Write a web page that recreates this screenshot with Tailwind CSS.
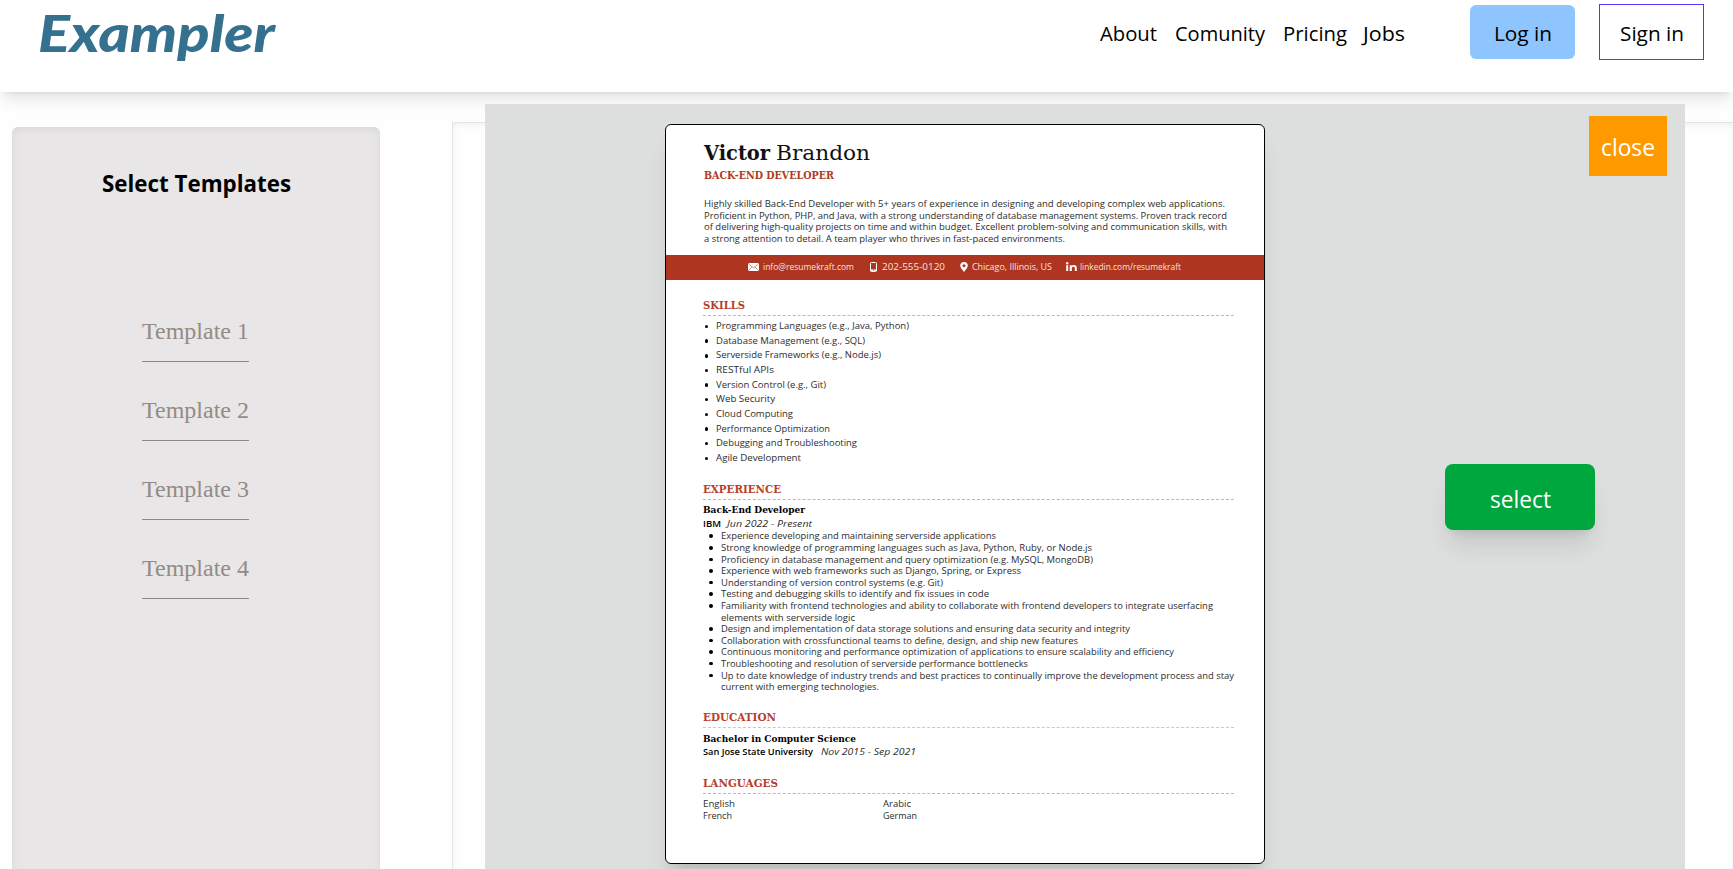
<!DOCTYPE html>
<html lang="en">
<head>
<meta charset="utf-8">
<title>Exampler</title>
<script src="https://cdn.jsdelivr.net/npm/@tailwindcss/browser@4"></script>
</head>
<body class="h-[869px] overflow-hidden bg-[#fefefe] font-['Open_Sans','Noto_Sans',sans-serif] text-black">
<header class="relative flex h-[92px] items-start justify-between bg-white shadow-lg">
  <div class="pl-[38px] -mt-[1px]">
    <span data-w="237" class="inline-block origin-left whitespace-nowrap font-[Lato,sans-serif] text-[51px] leading-[68px] font-black italic text-[#35718f]">Exampler</span>
  </div>
  <div class="flex items-start pr-[29px] text-[20px]">
    <nav class="flex h-[67px] items-center">
      <a class="w-[75px]"><span data-w="57" class="inline-block origin-left whitespace-nowrap">About</span></a>
      <a class="w-[108px]"><span data-w="90" class="inline-block origin-left whitespace-nowrap">Comunity</span></a>
      <a class="w-[80px]"><span data-w="64" class="inline-block origin-left whitespace-nowrap">Pricing</span></a>
      <a class="w-[107px]"><span data-w="42" class="inline-block origin-left whitespace-nowrap">Jobs</span></a>
    </nav>
    <button class="mt-[5px] flex h-[54px] w-[105px] items-center rounded-md bg-blue-300 pt-[3px] pl-[24px]"><span data-w="58" class="inline-block origin-left whitespace-nowrap">Log in</span></button>
    <button class="mt-[4px] ml-[24px] flex h-[56px] w-[105px] items-center border border-indigo-600 pt-[3px] pl-[20px]"><span data-w="64" class="inline-block origin-left whitespace-nowrap">Sign in</span></button>
  </div>
</header>

<main class="flex h-[777px] items-start overflow-hidden">
  <aside class="mt-[35px] ml-[12px] flex h-[900px] w-[368px] flex-col rounded-md bg-[#e8e6e7] pt-[38px] shadow-[inset_0_2px_8px_rgba(0,0,0,0.07)]">
    <h2 class="pl-[90px] text-[24px] leading-[36px] font-bold"><span data-w="189" class="inline-block origin-left whitespace-nowrap">Select Templates</span></h2>
    <ul class="mt-[112px] ml-[130px] flex w-[107px] flex-col gap-[30px] font-['Liberation_Serif',serif] text-[24px] leading-[36px] text-[#938b86]">
      <li class="h-[49px] border-b border-[#8c8784] whitespace-nowrap">Template 1</li>
      <li class="h-[49px] border-b border-[#8c8784] whitespace-nowrap">Template 2</li>
      <li class="h-[49px] border-b border-[#8c8784] whitespace-nowrap">Template 3</li>
      <li class="h-[49px] border-b border-[#8c8784] whitespace-nowrap">Template 4</li>
    </ul>
  </aside>
  <section class="mt-[30px] ml-[72px] h-[900px] flex-1 border-t border-l border-[#e2e4e8] shadow-[inset_0_2px_6px_rgba(0,0,0,0.06)]"></section>
</main>

<!-- Template preview dialog -->
<div class="absolute top-[104px] left-[485px] grid h-[765px] w-[1200px] grid-cols-[180px_600px_420px] overflow-hidden bg-[#dddfde]">
  <div></div>
  <article class="mt-[20px] h-[740px] overflow-hidden rounded-md border border-black bg-white text-[9px] text-[#2d2d2d] shadow-xl">
    <div class="pt-[15px] pl-[38px]">
      <h1 class="flex h-[27px] font-['DejaVu_Serif',serif] text-[20px] leading-[27px] text-[#111]">
        <span class="w-[72px]"><b data-w="66" class="inline-block origin-left whitespace-nowrap">Victor</b></span>
        <span data-w="94" class="inline-block origin-left whitespace-nowrap">Brandon</span>
      </h1>
      <p class="h-[17px] font-['DejaVu_Serif',serif] text-[10.5px] leading-[17px] font-bold text-[#b23b25]"><span data-w="130" class="inline-block origin-left whitespace-nowrap">BACK-END DEVELOPER</span></p>
      <div class="mt-[14px] flex h-[57px] flex-col items-start leading-[11.65px]">
        <span data-w="521" class="inline-block origin-left whitespace-nowrap">Highly skilled Back-End Developer with 5+ years of experience in designing and developing complex web applications.</span>
        <span data-w="523" class="inline-block origin-left whitespace-nowrap">Proficient in Python, PHP, and Java, with a strong understanding of database management systems. Proven track record</span>
        <span data-w="523" class="inline-block origin-left whitespace-nowrap">of delivering high-quality projects on time and within budget. Excellent problem-solving and communication skills, with</span>
        <span data-w="361" class="inline-block origin-left whitespace-nowrap">a strong attention to detail. A team player who thrives in fast-paced environments.</span>
      </div>
    </div>
    <div class="flex h-[25px] items-center bg-[#ae3520] pb-[2px] pl-[82px] leading-[12px] text-[#f6e3df]">
      <svg class="h-[8px] w-[11px]" viewBox="0 0 11 8"><rect width="11" height="8" rx="1.5" fill="#fff"/><path d="M1.2 1.4 5.5 4.8 9.8 1.4M1.2 6.8 4 4M9.8 6.8 7 4" fill="none" stroke="#ae3520" stroke-width=".6"/></svg>
      <span class="ml-[4px] w-[107px]"><span data-w="91" class="inline-block origin-left whitespace-nowrap">info@resumekraft.com</span></span>
      <svg class="h-[10px] w-[7px]" viewBox="0 0 7 10"><rect x=".5" y=".5" width="6" height="9" rx=".9" fill="none" stroke="#fff"/><path d="M.5 7.5h6V9h-6z" fill="#fff"/><circle cx="3.5" cy="8.5" r=".5" fill="#ae3520"/></svg>
      <span class="ml-[5px] w-[78px]"><span data-w="63" class="inline-block origin-left whitespace-nowrap">202-555-0120</span></span>
      <svg class="h-[10px] w-[8px]" viewBox="0 0 8 10"><path fill-rule="evenodd" d="M4 0a3.8 3.8 0 0 1 3.8 3.8C7.8 6 5.2 8 4 10 2.8 8 .2 6 .2 3.8A3.8 3.8 0 0 1 4 0zm0 2.3a1.5 1.5 0 1 0 0 3 1.5 1.5 0 0 0 0-3z" fill="#fff"/></svg>
      <span class="ml-[4px] w-[94px]"><span data-w="80" class="inline-block origin-left whitespace-nowrap">Chicago, Illinois, US</span></span>
      <svg class="-mt-[1px] h-[9px] w-[11px]" viewBox="0 0 11 9" fill="#fff"><circle cx="1.2" cy="1.2" r="1.2"/><path d="M.2 3.2h2V9h-2zM3.7 3.2h2V4c.4-.6 1.1-1 2.2-1C10 3 10.8 4.1 10.8 6v3h-2V6.3c0-1-.3-1.6-1.3-1.6-1.1 0-1.7.7-1.7 1.8V9H3.7z"/></svg>
      <span class="ml-[3px]"><span data-w="101" class="inline-block origin-left whitespace-nowrap">linkedin.com/resumekraft</span></span>
    </div>
    <div class="w-[568px] pl-[37px]">
      <h3 class="mt-[18px] h-[18px] border-b border-dashed border-[#b9b9b9] font-['DejaVu_Serif',serif] text-[11px] leading-[16px] font-bold text-[#b8402b]"><span data-w="42" class="inline-block origin-left whitespace-nowrap">SKILLS</span></h3>
      <ul class="mt-[3.2px] leading-[14.65px]">
        <li class="flex h-[14.65px] items-center pl-[1.5px]"><i class="mr-[8px] size-[3.5px] rounded-full bg-black"></i><span data-w="193" class="inline-block origin-left whitespace-nowrap">Programming Languages (e.g., Java, Python)</span></li>
        <li class="flex h-[14.65px] items-center pl-[1.5px]"><i class="mr-[8px] size-[3.5px] rounded-full bg-black"></i><span data-w="149" class="inline-block origin-left whitespace-nowrap">Database Management (e.g., SQL)</span></li>
        <li class="flex h-[14.65px] items-center pl-[1.5px]"><i class="mr-[8px] size-[3.5px] rounded-full bg-black"></i><span data-w="165" class="inline-block origin-left whitespace-nowrap">Serverside Frameworks (e.g., Node.js)</span></li>
        <li class="flex h-[14.65px] items-center pl-[1.5px]"><i class="mr-[8px] size-[3.5px] rounded-full bg-black"></i><span data-w="58" class="inline-block origin-left whitespace-nowrap">RESTful APIs</span></li>
        <li class="flex h-[14.65px] items-center pl-[1.5px]"><i class="mr-[8px] size-[3.5px] rounded-full bg-black"></i><span data-w="110" class="inline-block origin-left whitespace-nowrap">Version Control (e.g., Git)</span></li>
        <li class="flex h-[14.65px] items-center pl-[1.5px]"><i class="mr-[8px] size-[3.5px] rounded-full bg-black"></i><span data-w="59" class="inline-block origin-left whitespace-nowrap">Web Security</span></li>
        <li class="flex h-[14.65px] items-center pl-[1.5px]"><i class="mr-[8px] size-[3.5px] rounded-full bg-black"></i><span data-w="77" class="inline-block origin-left whitespace-nowrap">Cloud Computing</span></li>
        <li class="flex h-[14.65px] items-center pl-[1.5px]"><i class="mr-[8px] size-[3.5px] rounded-full bg-black"></i><span data-w="114" class="inline-block origin-left whitespace-nowrap">Performance Optimization</span></li>
        <li class="flex h-[14.65px] items-center pl-[1.5px]"><i class="mr-[8px] size-[3.5px] rounded-full bg-black"></i><span data-w="141" class="inline-block origin-left whitespace-nowrap">Debugging and Troubleshooting</span></li>
        <li class="flex h-[14.65px] items-center pl-[1.5px]"><i class="mr-[8px] size-[3.5px] rounded-full bg-black"></i><span data-w="85" class="inline-block origin-left whitespace-nowrap">Agile Development</span></li>
      </ul>

      <h3 class="mt-[15.3px] h-[19px] border-b border-dashed border-[#b9b9b9] font-['DejaVu_Serif',serif] text-[11px] leading-[17px] font-bold text-[#b8402b]"><span data-w="78" class="inline-block origin-left whitespace-nowrap">EXPERIENCE</span></h3>
      <h4 class="mt-[3px] h-[14px] font-['DejaVu_Serif',serif] text-[10px] leading-[14px] font-bold text-black"><span data-w="102" class="inline-block origin-left whitespace-nowrap">Back-End Developer</span></h4>
      <p class="flex h-[13px] leading-[13px]"><span class="w-[24px] font-semibold text-black"><span data-w="18" class="inline-block origin-left whitespace-nowrap">IBM</span></span><em data-w="85" class="inline-block origin-left whitespace-nowrap">Jun 2022 - Present</em></p>
      <ul class="mt-[.5px] leading-[11.6px]">
        <li class="flex h-[11.6px] items-center pl-[6px]"><i class="mr-[8px] size-[3.5px] rounded-full bg-black"></i><span data-w="275" class="inline-block origin-left whitespace-nowrap">Experience developing and maintaining serverside applications</span></li>
        <li class="flex h-[11.6px] items-center pl-[6px]"><i class="mr-[8px] size-[3.5px] rounded-full bg-black"></i><span data-w="371" class="inline-block origin-left whitespace-nowrap">Strong knowledge of programming languages such as Java, Python, Ruby, or Node.js</span></li>
        <li class="flex h-[11.6px] items-center pl-[6px]"><i class="mr-[8px] size-[3.5px] rounded-full bg-black"></i><span data-w="372" class="inline-block origin-left whitespace-nowrap">Proficiency in database management and query optimization (e.g. MySQL, MongoDB)</span></li>
        <li class="flex h-[11.6px] items-center pl-[6px]"><i class="mr-[8px] size-[3.5px] rounded-full bg-black"></i><span data-w="300" class="inline-block origin-left whitespace-nowrap">Experience with web frameworks such as Django, Spring, or Express</span></li>
        <li class="flex h-[11.6px] items-center pl-[6px]"><i class="mr-[8px] size-[3.5px] rounded-full bg-black"></i><span data-w="222" class="inline-block origin-left whitespace-nowrap">Understanding of version control systems (e.g. Git)</span></li>
        <li class="flex h-[11.6px] items-center pl-[6px]"><i class="mr-[8px] size-[3.5px] rounded-full bg-black"></i><span data-w="268" class="inline-block origin-left whitespace-nowrap">Testing and debugging skills to identify and fix issues in code</span></li>
        <li class="flex h-[11.6px] items-center pl-[6px]"><i class="mr-[8px] size-[3.5px] rounded-full bg-black"></i><span data-w="492" class="inline-block origin-left whitespace-nowrap">Familiarity with frontend technologies and ability to collaborate with frontend developers to integrate userfacing</span></li>
        <li class="flex h-[11.6px] items-center pl-[17.5px]"><span data-w="134" class="inline-block origin-left whitespace-nowrap">elements with serverside logic</span></li>
        <li class="flex h-[11.6px] items-center pl-[6px]"><i class="mr-[8px] size-[3.5px] rounded-full bg-black"></i><span data-w="409" class="inline-block origin-left whitespace-nowrap">Design and implementation of data storage solutions and ensuring data security and integrity</span></li>
        <li class="flex h-[11.6px] items-center pl-[6px]"><i class="mr-[8px] size-[3.5px] rounded-full bg-black"></i><span data-w="357" class="inline-block origin-left whitespace-nowrap">Collaboration with crossfunctional teams to define, design, and ship new features</span></li>
        <li class="flex h-[11.6px] items-center pl-[6px]"><i class="mr-[8px] size-[3.5px] rounded-full bg-black"></i><span data-w="453" class="inline-block origin-left whitespace-nowrap">Continuous monitoring and performance optimization of applications to ensure scalability and efficiency</span></li>
        <li class="flex h-[11.6px] items-center pl-[6px]"><i class="mr-[8px] size-[3.5px] rounded-full bg-black"></i><span data-w="307" class="inline-block origin-left whitespace-nowrap">Troubleshooting and resolution of serverside performance bottlenecks</span></li>
        <li class="flex h-[11.6px] items-center pl-[6px]"><i class="mr-[8px] size-[3.5px] rounded-full bg-black"></i><span data-w="513" class="inline-block origin-left whitespace-nowrap">Up to date knowledge of industry trends and best practices to continually improve the development process and stay</span></li>
        <li class="flex h-[11.6px] items-center pl-[17.5px]"><span data-w="158" class="inline-block origin-left whitespace-nowrap">current with emerging technologies.</span></li>
      </ul>

      <h3 class="mt-[16.6px] h-[19px] border-b border-dashed border-[#c9c9c9] font-['DejaVu_Serif',serif] text-[11px] leading-[17px] font-bold text-[#b8402b]"><span data-w="73" class="inline-block origin-left whitespace-nowrap">EDUCATION</span></h3>
      <h4 class="mt-[3.5px] h-[14px] font-['DejaVu_Serif',serif] text-[10px] leading-[14px] font-bold text-black"><span data-w="153" class="inline-block origin-left whitespace-nowrap">Bachelor in Computer Science</span></h4>
      <p class="flex h-[12px] leading-[12px]"><span class="w-[118px] font-semibold text-black"><span data-w="110" class="inline-block origin-left whitespace-nowrap">San Jose State University</span></span><em data-w="95" class="inline-block origin-left whitespace-nowrap">Nov 2015 - Sep 2021</em></p>

      <h3 class="mt-[17.5px] h-[19px] border-b border-dashed border-[#b9b9b9] font-['DejaVu_Serif',serif] text-[11px] leading-[17px] font-bold text-[#b8402b]"><span data-w="75" class="inline-block origin-left whitespace-nowrap">LANGUAGES</span></h3>
      <div class="mt-[3.5px] grid grid-cols-[180px_1fr] leading-[12.3px]">
        <div><span data-w="32" class="inline-block origin-left whitespace-nowrap">English</span></div>
        <div><span data-w="28" class="inline-block origin-left whitespace-nowrap">Arabic</span></div>
        <div><span data-w="29" class="inline-block origin-left whitespace-nowrap">French</span></div>
        <div><span data-w="34" class="inline-block origin-left whitespace-nowrap">German</span></div>
      </div>
    </div>
  </article>
  <div class="flex flex-col items-end text-[24px] text-white">
    <button class="mt-[12px] mr-[18px] flex h-[60px] w-[78px] items-center bg-amber-500 pt-[2px] pl-[12px]"><span data-w="54" class="inline-block origin-left whitespace-nowrap">close</span></button>
    <button class="mt-[288px] mr-[90px] flex h-[66px] w-[150px] items-center rounded-lg bg-green-600 pt-[3px] pl-[45px] shadow-xl"><span data-w="61" class="inline-block origin-left whitespace-nowrap">select</span></button>
  </div>
</div>
<script>
  // Stretch each label horizontally to its set width, again whenever its natural width changes.
  const fit = new ResizeObserver(function (entries) {
    for (const e of entries) {
      if (e.contentRect.width) e.target.style.transform = 'scaleX(' + e.target.dataset.w / e.contentRect.width + ')';
    }
  });
  document.querySelectorAll('[data-w]').forEach(function (el) { fit.observe(el); });
</script>
</body>
</html>
